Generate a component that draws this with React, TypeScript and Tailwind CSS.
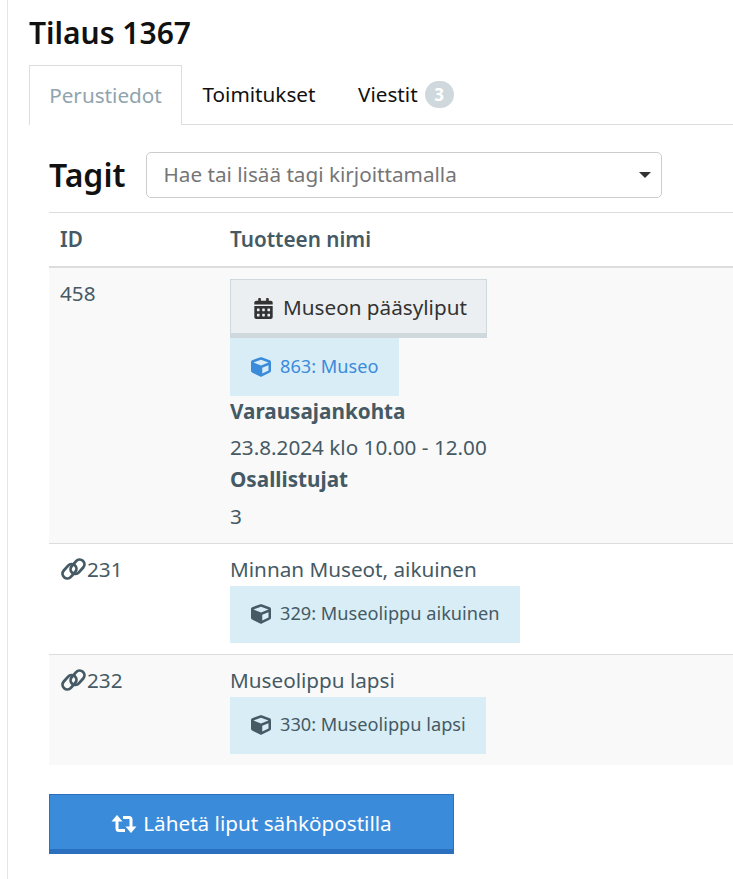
import { FaCalendarAlt, FaCube } from "react-icons/fa";

function Chip({ icon = "text-[#455a64]", text = "text-[#455a64]", label, tall = false }: { icon?: string; text?: string; label: string; tall?: boolean }) {
  return (
    <div className={tall ? "h-[58px]" : "h-[57px]"}>
      <div className={`inline-flex items-center gap-[9px] bg-[#d9edf7] pr-[20px] pl-[21px] text-[18.2px] ${tall ? "h-[58px]" : "h-[57px]"}`}>
        <FaCube className={`h-[20px] w-[20px] ${icon}`} />
        <span className={text}>{label}</span>
      </div>
    </div>
  );
}

function ChainIcon() {
  return (
    <svg viewBox="0 0 27 22" className="h-[22px] w-[27px] shrink-0" fill="none" stroke="currentColor" strokeWidth="2.8">
      <rect x="1.5" y="8.5" width="16" height="9.5" rx="4.75" transform="rotate(-48 9.5 13.25)" />
      <rect x="9.5" y="4" width="16" height="9.5" rx="4.75" transform="rotate(-48 17.5 8.75)" />
    </svg>
  );
}

function RetweetIcon() {
  return (
    <svg viewBox="0 0 26 20" className="h-[20px] w-[26px] shrink-0" fill="none" stroke="currentColor" strokeWidth="3">
      <path d="M6 6V14.5Q6 16.5 8 16.5H14" />
      <path d="M12 3.5H18Q20 3.5 20 5.5V14" />
      <path d="M0.5 7.5L6 1L11.5 7.5Z" fill="currentColor" stroke="none" />
      <path d="M14.5 12.5L20 19L25.5 12.5Z" fill="currentColor" stroke="none" />
    </svg>
  );
}

export default function App() {
  return (
    <div className="h-[879px] w-[733px] overflow-hidden bg-white font-['Noto_Sans',sans-serif] text-[#455a64]">
      <div className="ml-[7px] h-full border-l border-[#e5e5e5] pl-[21px]">
        <h1 className="h-[65px] pt-[13px] text-[30px] leading-[40px] font-semibold text-[#111]">Tilaus 1367</h1>
        <div className="flex h-[60px] border-b border-[#ddd] text-[20.7px]">
          <div className="-mb-px flex h-[60px] w-[153px] items-center justify-center border border-b-0 border-[#ddd] bg-white text-[#90a4ae]">Perustiedot</div>
          <div className="flex w-[154px] items-center justify-center text-[#111]">Toimitukset</div>
          <div className="flex items-center gap-[7px] pl-[22px] text-[#111]">
            Viestit
            <span className="flex h-[27px] w-[29px] items-center justify-center rounded-full bg-[#cfd8dc] text-[17px] font-bold text-white">3</span>
          </div>
        </div>
        <div className="ml-[20px]">
          <div className="flex h-[88px] items-center gap-[21px] border-b border-[#ddd] pt-[12px]">
            <span className="text-[32px] font-semibold text-[#111]">Tagit</span>
            <div className="flex h-[46px] w-[516px] items-center justify-between rounded-[5px] border border-[#ccc] pr-[10px] pl-[16px] text-[20.7px] text-[#757575]">
              Hae tai lisää tagi kirjoittamalla
              <span className="h-0 w-0 border-x-[6px] border-t-[6px] border-x-transparent border-t-[#333]" />
            </div>
          </div>
          <table className="w-[684px] table-fixed border-collapse text-[20.7px]">
            <colgroup>
              <col className="w-[170px]" />
              <col />
            </colgroup>
            <thead>
              <tr className="h-[54px] border-b-2 border-[#ddd] text-left">
                <th className="px-[11px] font-semibold">ID</th>
                <th className="px-[11px] font-semibold">Tuotteen nimi</th>
              </tr>
            </thead>
            <tbody>
              <tr className="h-[276px] border-b border-[#ddd] bg-[#f9f9f9] align-top">
                <td className="px-[11px] pt-[10px] leading-[30px]">458</td>
                <td className="px-[11px] pt-[11px]">
                  <div className="flex h-[59px] w-[257px] items-center justify-center gap-[10px] border border-b-[5px] border-[#cfd8dc] bg-[#eceff1] pt-[3px] pl-[4px] text-[#333]">
                    <FaCalendarAlt className="h-[21px] w-[19px]" />
                    Museon pääsyliput
                  </div>
                  <Chip tall icon="text-[#3b8bdb]" text="text-[#3b8bdb]" label="863: Museo" />
                  <div className="leading-[30px] font-bold">Varausajankohta</div>
                  <div className="mt-[6px] leading-[30px]">23.8.2024 klo 10.00 - 12.00</div>
                  <div className="mt-[2px] leading-[30px] font-bold">Osallistujat</div>
                  <div className="mt-[7px] leading-[30px]">3</div>
                </td>
              </tr>
              <tr className="h-[111px] border-b border-[#ddd] align-top">
                <td className="px-[11px] pt-[10px] leading-[30px]">
                  <span className="flex items-center">
                    <ChainIcon />
                    231
                  </span>
                </td>
                <td className="px-[11px] pt-[10px]">
                  <div className="h-[32px] leading-[30px]">Minnan Museot, aikuinen</div>
                  <Chip label="329: Museolippu aikuinen" />
                </td>
              </tr>
              <tr className="h-[111px] bg-[#f9f9f9] align-top">
                <td className="px-[11px] pt-[10px] leading-[30px]">
                  <span className="flex items-center">
                    <ChainIcon />
                    232
                  </span>
                </td>
                <td className="px-[11px] pt-[10px]">
                  <div className="h-[32px] leading-[30px]">Museolippu lapsi</div>
                  <Chip label="330: Museolippu lapsi" />
                </td>
              </tr>
            </tbody>
          </table>
          <div className="mt-[29px] flex h-[60px] w-[405px] items-center justify-center gap-[6px] border border-b-[5px] border-[#2a70bf] bg-[#3b8bdb] pt-[4px] text-[20.7px] text-white">
            <RetweetIcon />
            Lähetä liput sähköpostilla
          </div>
        </div>
      </div>
    </div>
  );
}
